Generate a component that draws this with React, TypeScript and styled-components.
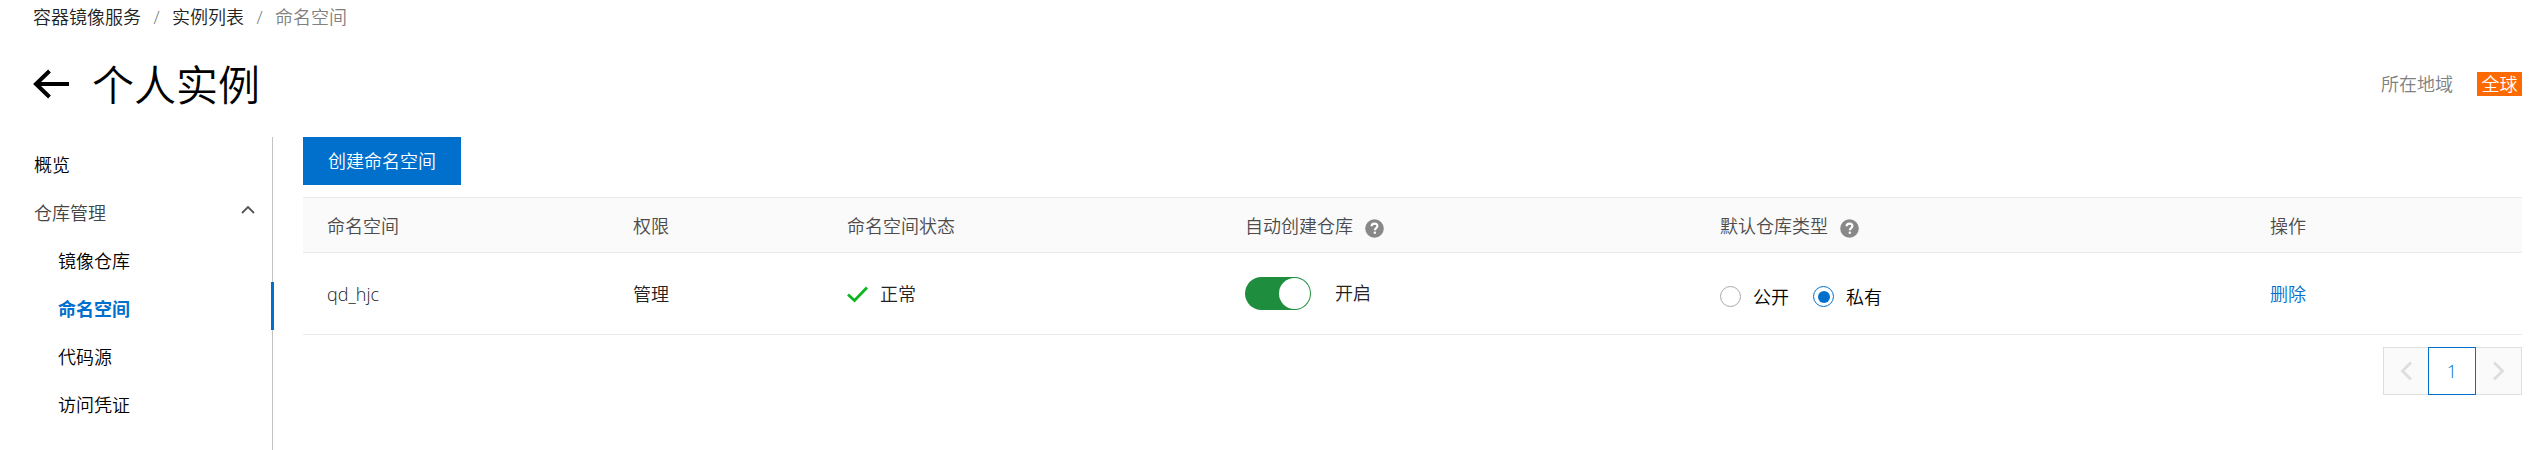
import React from "react";
import styled, { createGlobalStyle } from "styled-components";

const GlobalStyle = createGlobalStyle`
  *, *::before, *::after { box-sizing: border-box; }
  body {
    margin: 0;
    background: #fff;
    color: #333;
    font-family: "Open Sans", "Noto Sans CJK SC", sans-serif;
    font-size: 18px;
    font-weight: 350;
    line-height: 24px;
    overflow: hidden;
  }
`;

const Page = styled.div`
  display: flex;
  flex-direction: column;
  height: 450px;
  padding: 0 23px 0 33px;
`;

const Breadcrumb = styled.nav`
  display: flex;
  height: 36px;
  line-height: 34px;
`;

const Crumb = styled.span<{ $current?: boolean }>`
  color: ${(p) => (p.$current ? "#808080" : "#222")};
`;

const Separator = styled.span`
  width: 31px;
  text-align: center;
  color: #777;
`;

const Header = styled.header`
  display: flex;
  align-items: center;
  height: 101px;
  padding-bottom: 6px;
`;

const Back = styled.svg`
  width: 36px;
  height: 30px;
  margin-right: 23px;
`;

const Title = styled.h1`
  margin: 3px 0 0;
  flex: 1;
  color: #000;
  font-size: 42px;
  font-weight: 350;
  line-height: 56px;
`;

const RegionLabel = styled.span`
  margin-right: 24px;
  color: #808080;
`;

const RegionTag = styled.span`
  width: 45px;
  height: 24px;
  text-align: center;
  color: #fff;
  background: #ff6a00;
`;

const Body = styled.div`
  display: flex;
  flex: 1;
`;

const Sidebar = styled.aside`
  width: 240px;
  padding-top: 1px;
  border-right: 1px solid #c3c3c3;
`;

const MenuItem = styled.div<{ $nested?: boolean; $active?: boolean; $group?: boolean }>`
  display: flex;
  align-items: center;
  justify-content: space-between;
  height: 48px;
  margin-right: ${(p) => (p.$active ? "-2px" : "0")};
  padding-top: 6px;
  padding-left: ${(p) => (p.$nested ? "25px" : "1px")};
  padding-right: 17px;
  color: ${(p) => (p.$active ? "#0070cc" : p.$group ? "#444" : "#000")};
  font-weight: ${(p) => (p.$active ? 700 : 350)};
  border-right: ${(p) => (p.$active ? "3px solid #0070cc" : "0")};
`;

const Caret = styled.svg`
  width: 14px;
  height: 9px;
  margin-top: -7px;
`;

const Main = styled.main`
  flex: 1;
  padding-left: 30px;
`;

const CreateButton = styled.button`
  display: block;
  width: 158px;
  height: 48px;
  margin-bottom: 12px;
  padding: 0;
  border: 0;
  color: #fff;
  background: #0070cc;
  font: inherit;
`;

const Row = styled.div<{ $head?: boolean }>`
  display: grid;
  grid-template-columns: 306px 214px 398px 475px 550px 1fr;
  height: ${(p) => (p.$head ? "56px" : "82px")};
  color: ${(p) => (p.$head ? "#4c4c4c" : "#222")};
  background: ${(p) => (p.$head ? "#fafafa" : "#fff")};
  border-top: ${(p) => (p.$head ? "1px solid #ebebeb" : "0")};
  border-bottom: 1px solid #ebebeb;
`;

const Cell = styled.div`
  display: flex;
  align-items: center;
  padding: 1px 24px 0;
`;

const HelpSvg = styled.svg`
  width: 19px;
  height: 19px;
  margin: 5px 0 0 12px;
`;

const Check = styled.svg`
  width: 21px;
  height: 17px;
  margin-right: 12px;
`;

const Toggle = styled.span`
  display: flex;
  justify-content: flex-end;
  width: 66px;
  height: 33px;
  margin: -1px 24px 0 0;
  padding: 1px;
  border-radius: 17px;
  background: #1e8e3e;
`;

const Knob = styled.span`
  width: 31px;
  height: 31px;
  border-radius: 50%;
  background: #fff;
`;

const ToggleText = styled.span`
  margin-top: -3px;
`;

const Choice = styled.label`
  display: flex;
  align-items: center;
  margin: 5px 24px 0 0;
  color: #000;
`;

const Radio = styled.span<{ $checked?: boolean }>`
  display: flex;
  align-items: center;
  justify-content: center;
  width: 21px;
  height: 21px;
  margin-right: 12px;
  border: 1px solid ${(p) => (p.$checked ? "#0070cc" : "#aaa")};
  border-radius: 50%;
  &::after {
    content: "";
    width: 12px;
    height: 12px;
    border-radius: 50%;
    background: ${(p) => (p.$checked ? "#0070cc" : "transparent")};
  }
`;

const Link = styled.a`
  color: #0070cc;
`;

const Pagination = styled.div`
  display: flex;
  justify-content: flex-end;
  margin-top: 12px;
`;

const PageButton = styled.span<{ $side?: "prev" | "next" }>`
  display: flex;
  align-items: center;
  justify-content: center;
  width: ${(p) => (p.$side === "prev" ? 45 : p.$side === "next" ? 46 : 48)}px;
  height: 48px;
  color: #0070cc;
  background: ${(p) => (p.$side ? "#fafafa" : "#fff")};
  border: 1px solid ${(p) => (p.$side ? "#dedede" : "#0070cc")};
  border-right-width: ${(p) => (p.$side === "prev" ? 0 : 1)}px;
  border-left-width: ${(p) => (p.$side === "next" ? 0 : 1)}px;
`;

const Chevron = styled.svg`
  width: 12px;
  height: 20px;
`;

const Help = () => (
  <HelpSvg viewBox="0 0 19 19" fill="none">
    <circle cx="9.5" cy="9.5" r="9.3" fill="#888" />
    <path d="M6.6 7.3c0-1.7 1.2-2.7 2.9-2.7s2.9 1 2.9 2.5c0 2-2.6 2.1-2.6 4.2" stroke="#fff" strokeWidth="2.1" />
    <rect x="8.7" y="12.6" width="2.2" height="2.2" fill="#fff" />
  </HelpSvg>
);

export default function App() {
  return (
    <>
      <GlobalStyle />
      <Page>
        <Breadcrumb>
          <Crumb>容器镜像服务</Crumb>
          <Separator>/</Separator>
          <Crumb>实例列表</Crumb>
          <Separator>/</Separator>
          <Crumb $current>命名空间</Crumb>
        </Breadcrumb>
        <Header>
          <Back viewBox="0 0 36 30" fill="none" stroke="#000" strokeWidth="4">
            <path d="M36 15H3M16.5 2L3 15l13.5 13" />
          </Back>
          <Title>个人实例</Title>
          <RegionLabel>所在地域</RegionLabel>
          <RegionTag>全球</RegionTag>
        </Header>
        <Body>
          <Sidebar>
            <MenuItem>概览</MenuItem>
            <MenuItem $group>
              仓库管理
              <Caret viewBox="0 0 14 9" fill="none" stroke="#555" strokeWidth="1.8">
                <path d="M1 8l6-6 6 6" />
              </Caret>
            </MenuItem>
            <MenuItem $nested>镜像仓库</MenuItem>
            <MenuItem $nested $active>命名空间</MenuItem>
            <MenuItem $nested>代码源</MenuItem>
            <MenuItem $nested>访问凭证</MenuItem>
          </Sidebar>
          <Main>
            <CreateButton>创建命名空间</CreateButton>
            <Row $head>
              <Cell>命名空间</Cell>
              <Cell>权限</Cell>
              <Cell>命名空间状态</Cell>
              <Cell>自动创建仓库<Help /></Cell>
              <Cell>默认仓库类型<Help /></Cell>
              <Cell>操作</Cell>
            </Row>
            <Row>
              <Cell>qd_hjc</Cell>
              <Cell>管理</Cell>
              <Cell>
                <Check viewBox="0 0 21 17" fill="none" stroke="#0fb422" strokeWidth="2.8">
                  <path d="M1 8.5l6.5 6L20 1.5" />
                </Check>
                正常
              </Cell>
              <Cell>
                <Toggle><Knob /></Toggle>
                <ToggleText>开启</ToggleText>
              </Cell>
              <Cell>
                <Choice><Radio />公开</Choice>
                <Choice><Radio $checked />私有</Choice>
              </Cell>
              <Cell><Link>删除</Link></Cell>
            </Row>
            <Pagination>
              <PageButton $side="prev">
                <Chevron viewBox="0 0 12 20" fill="none" stroke="#dedede" strokeWidth="3">
                  <path d="M11 1.5L2.5 10l8.5 8.5" />
                </Chevron>
              </PageButton>
              <PageButton>1</PageButton>
              <PageButton $side="next">
                <Chevron viewBox="0 0 12 20" fill="none" stroke="#dedede" strokeWidth="3">
                  <path d="M1 1.5l8.5 8.5L1 18.5" />
                </Chevron>
              </PageButton>
            </Pagination>
          </Main>
        </Body>
      </Page>
    </>
  );
}
